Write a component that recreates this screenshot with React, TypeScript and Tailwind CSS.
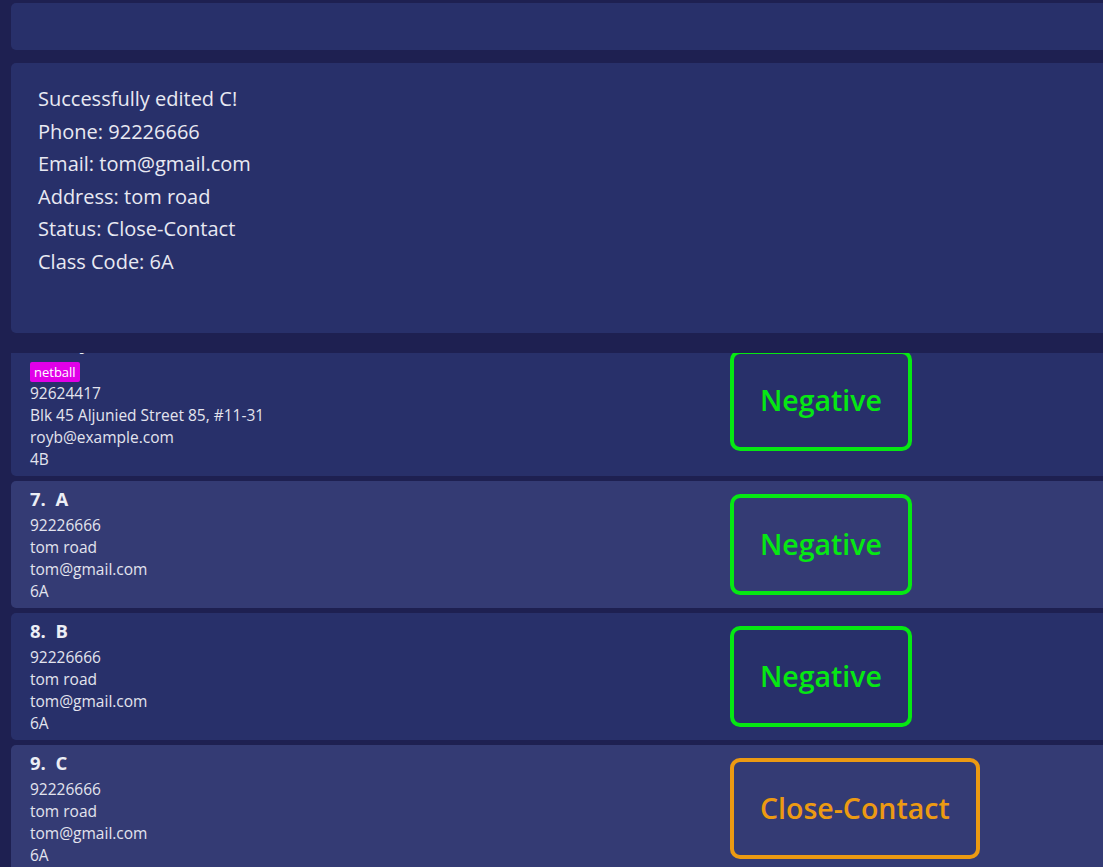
import React from 'react';

type Person = {
  index: number;
  name: string;
  tags: string[];
  phone: string;
  address: string;
  email: string;
  classCode: string;
  status: 'Negative' | 'Close-Contact';
};

const people: Person[] = [
  {
    index: 6,
    name: 'Roy Balakrishnan',
    tags: ['netball'],
    phone: '92624417',
    address: 'Blk 45 Aljunied Street 85, #11-31',
    email: 'royb@example.com',
    classCode: '4B',
    status: 'Negative',
  },
  { index: 7, name: 'A', tags: [], phone: '92226666', address: 'tom road', email: 'tom@gmail.com', classCode: '6A', status: 'Negative' },
  { index: 8, name: 'B', tags: [], phone: '92226666', address: 'tom road', email: 'tom@gmail.com', classCode: '6A', status: 'Negative' },
  { index: 9, name: 'C', tags: [], phone: '92226666', address: 'tom road', email: 'tom@gmail.com', classCode: '6A', status: 'Close-Contact' },
];

const resultLines = [
  'Successfully edited C!',
  'Phone: 92226666',
  'Email: tom@gmail.com',
  'Address: tom road',
  'Status: Close-Contact',
  'Class Code: 6A',
];

function StatusBox({ status }: { status: Person['status'] }) {
  const isNegative = status === 'Negative';
  return (
    <div
      className={`h-[101px] flex items-center justify-center rounded-[10px] border-4 px-[26px] text-[28.5px] font-semibold ${
        isNegative ? 'border-[#06e813] text-[#06e813]' : 'border-[#ec9a12] text-[#ec9a12]'
      }`}
    >
      {status}
    </div>
  );
}

function PersonCard({ person, odd }: { person: Person; odd: boolean }) {
  const hasTags = person.tags.length > 0;
  return (
    <div
      className={`grid grid-cols-[700px_auto] items-center rounded-l-[5px] pl-[19px] pt-[6px] pb-[6px] ${
        odd ? 'bg-[#343b74]' : 'bg-[#28306a]'
      }`}
    >
      <div>
        <div className="text-[18.5px] font-bold leading-[24px] text-[#eceef5]">
          {person.index}.&nbsp;&nbsp;{person.name}
        </div>
        {hasTags && (
          <div className="mt-[7px] flex gap-1">
            {person.tags.map((tag) => (
              <span key={tag} className="rounded-[2px] bg-[#e100e8] px-[4px] text-[13px] leading-[20px] text-white">
                {tag}
              </span>
            ))}
          </div>
        )}
        <div className={`${hasTags ? '' : 'mt-[3px]'} text-[15.5px] leading-[22px] text-[#e3e4ee]`}>
          <div>{person.phone}</div>
          <div>{person.address}</div>
          <div>{person.email}</div>
          <div>{person.classCode}</div>
        </div>
      </div>
      <div className="flex">
        <StatusBox status={person.status} />
      </div>
    </div>
  );
}

export default function App() {
  return (
    <div
      className="h-[867px] w-full overflow-hidden bg-[#1e2051]"
      style={{ fontFamily: '"Open Sans", "Noto Sans", sans-serif' }}
    >
      <div className="w-[1130px] pl-[11px]">
        {/* command box */}
        <div className="mt-[3px] h-[47px] rounded-l-[5px] bg-[#28306a]" />

        {/* result display */}
        <div className="mt-[13px] h-[270px] rounded-l-[5px] bg-[#28306a] pl-[27px] pt-[20px] text-[20px] leading-[32.5px] text-[#e8e9f2]">
          {resultLines.map((line) => (
            <div key={line}>{line}</div>
          ))}
        </div>

        {/* person list, scrolled so card 6 is partly hidden */}
        <div className="mt-[20px] h-[514px] overflow-hidden">
          <div className="-mt-[28px] flex flex-col gap-[5px]">
            {people.map((p, i) => (
              <PersonCard key={p.index} person={p} odd={i % 2 === 1} />
            ))}
          </div>
        </div>
      </div>
    </div>
  );
}
